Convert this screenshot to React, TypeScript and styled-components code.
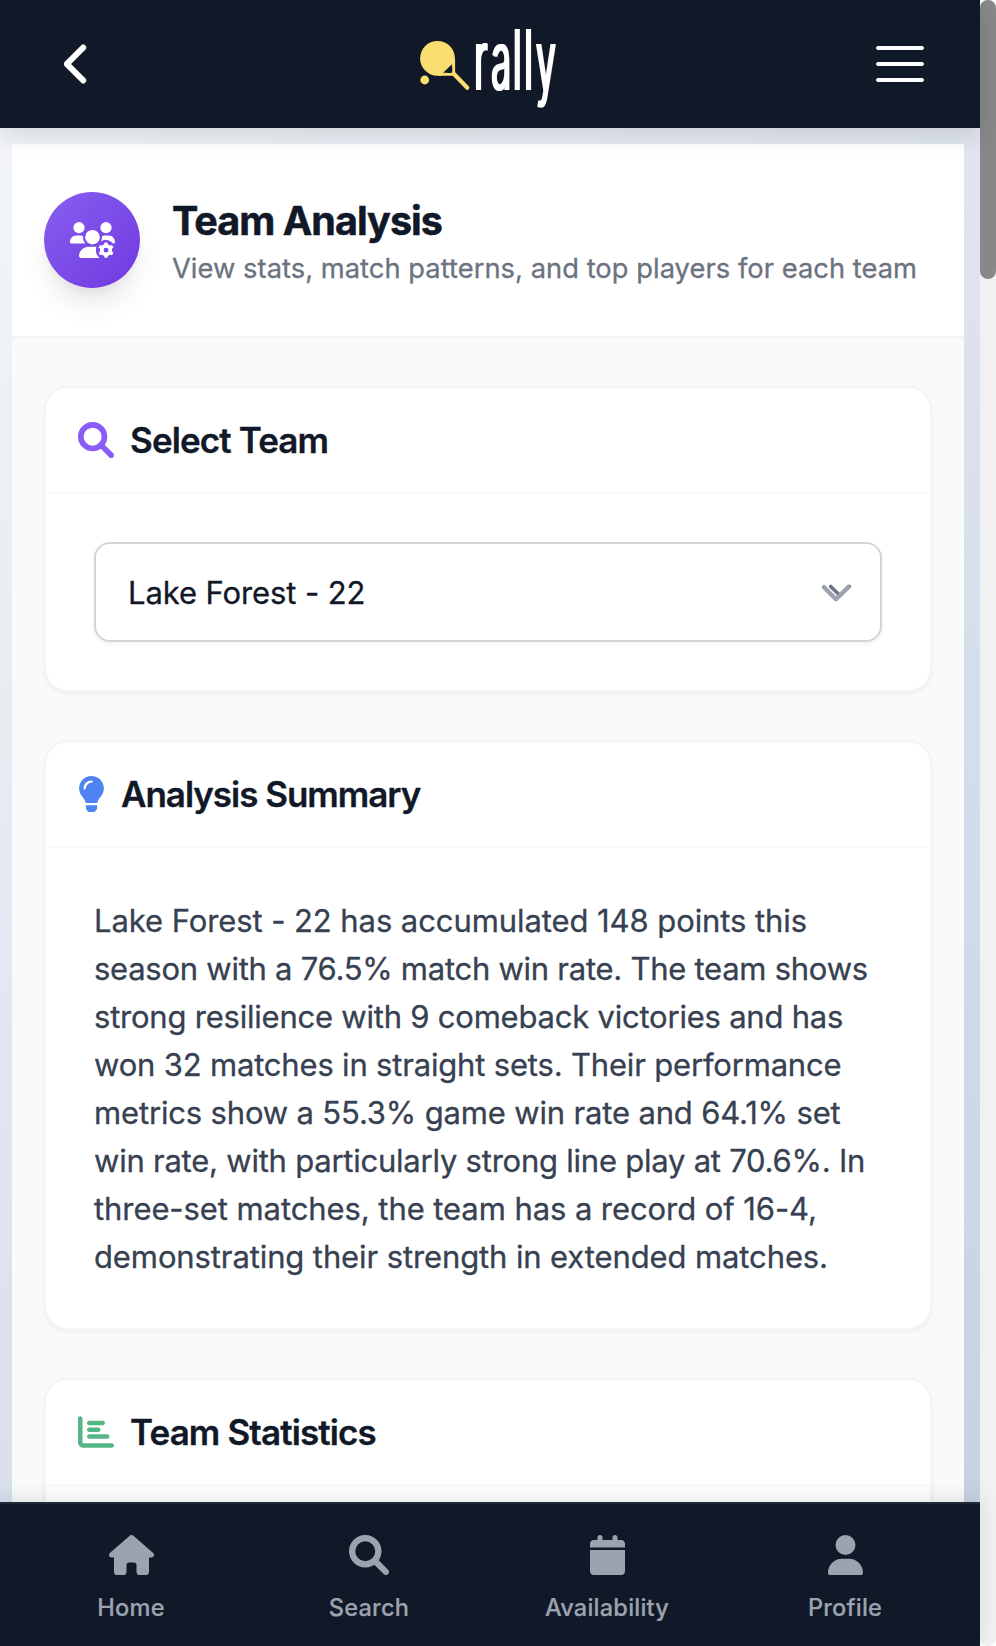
import React from "react";
import styled, { createGlobalStyle } from "styled-components";
import { FaCalendar, FaChartBar, FaChevronLeft, FaHouse, FaUser } from "react-icons/fa6";

const GlobalStyle = createGlobalStyle`
  *, *::before, *::after { box-sizing: border-box; }
  html, body, #root { height: 100%; }
  body {
    margin: 0;
    overflow: hidden;
    background: #fff;
    color: #111827;
    font-family: Inter, "Liberation Sans", sans-serif;
  }
  h1, h2, p { margin: 0; }
  button { border: 0; padding: 0; background: none; color: inherit; font: inherit; }
  svg { display: block; flex: none; }
`;

const Viewport = styled.div`
  display: flex;
  height: 100vh;
`;

const Screen = styled.div`
  display: flex;
  flex-direction: column;
  flex: 1;
  min-width: 0;
  height: 100%;
  background: linear-gradient(135deg, #f5f7fa 0%, #c3cfe2 100%);
`;

const Glyph = styled.span<{ $size: number; $ratio?: number }>`
  display: block;
  flex: none;
  font-size: ${({ $size }) => $size}px;

  svg {
    width: ${({ $ratio = 1 }) => $ratio}em;
    height: 1em;
  }
`;

const TopBar = styled.header`
  position: relative;
  z-index: 2;
  display: grid;
  grid-template-columns: 1fr auto 1fr;
  align-items: center;
  flex: none;
  height: 128px;
  padding: 0 56px;
  background: #111827;
  color: #fff;
  box-shadow: 0 8px 24px rgba(0, 0, 0, 0.12);
`;

const BackButton = styled.button`
  justify-self: start;
  margin-left: 8px;

  svg {
    stroke: currentColor;
    stroke-width: 8px;
  }
`;

const MenuButton = styled.button`
  display: flex;
  flex-direction: column;
  gap: 12px;
  justify-self: end;
`;

const MenuLine = styled.span`
  width: 48px;
  height: 4px;
  border-radius: 2px;
  background: #fff;
`;

const Main = styled.main`
  flex: 1;
  min-height: 0;
  overflow: hidden;
  margin: 16px 16px 0 12px;
  background: #f9fafb;
`;

const PageHeader = styled.section`
  display: flex;
  align-items: center;
  gap: 32px;
  height: 194px;
  padding: 0 32px;
  border-bottom: 2px solid #f3f4f6;
  background: #fff;
`;

const TeamBadge = styled.div`
  display: flex;
  align-items: center;
  justify-content: center;
  flex: none;
  width: 96px;
  height: 96px;
  padding-bottom: 1px;
  border-radius: 50%;
  background: linear-gradient(135deg, #875ff0, #7139e0);
  color: #fff;
  box-shadow: 0 20px 30px -6px rgba(0, 0, 0, 0.1), 0 8px 12px -4px rgba(0, 0, 0, 0.05);
`;

const Heading = styled.div`
  display: flex;
  flex-direction: column;
  padding-top: 9px;
  white-space: nowrap;
`;

const PageTitle = styled.h1`
  font-size: 39.5px;
  line-height: 48px;
  font-weight: 700;
  letter-spacing: -0.95px;
  -webkit-text-stroke: 0.5px currentColor;
`;

const Subtitle = styled.p`
  font-size: 27.3px;
  line-height: 47px;
  letter-spacing: 0.04px;
  color: #6b7280;
  -webkit-text-stroke: 0.3px currentColor;
`;

const CardList = styled.div`
  display: flex;
  flex-direction: column;
  gap: 48px;
  padding: 48px 32px 0;
`;

const Card = styled.section`
  border: 2px solid #f3f4f6;
  border-radius: 24px;
  background: #fff;
  box-shadow: 0 2px 4px rgba(0, 0, 0, 0.05);
`;

const CardHeader = styled.div<{ $accent: string }>`
  display: flex;
  align-items: center;
  gap: 16px;
  height: 106px;
  padding: 0 32px;
  border-bottom: 2px solid #f9fafb;
  color: ${({ $accent }) => $accent};
`;

const CardTitle = styled.h2<{ $tracking?: number }>`
  color: #111827;
  font-size: 35px;
  line-height: 48px;
  font-weight: 600;
  letter-spacing: ${({ $tracking = -0.88 }) => $tracking}px;
  white-space: nowrap;
  -webkit-text-stroke: 0.3px currentColor;
`;

const CardBody = styled.div`
  padding: 48px;
`;

const TeamSelect = styled.div`
  display: flex;
  align-items: center;
  justify-content: space-between;
  height: 100px;
  padding: 0 28px 0 32px;
  border: 2px solid #d1d5db;
  border-radius: 16px;
  font-size: 31px;
  letter-spacing: -0.1px;
  box-shadow: 0 2px 4px rgba(0, 0, 0, 0.05);
  -webkit-text-stroke: 0.3px currentColor;
`;

const Summary = styled.p`
  padding-top: 1px;
  margin-bottom: -1px;
  color: #374151;
  font-size: 31px;
  line-height: 48px;
  white-space: nowrap;
  -webkit-text-stroke: 0.3px currentColor;
`;

const SummaryLine = styled.span<{ $tracking: number }>`
  display: block;
  letter-spacing: ${({ $tracking }) => $tracking}px;
`;

const BottomNav = styled.nav`
  position: relative;
  z-index: 2;
  display: grid;
  grid-template-columns: repeat(4, 1fr);
  flex: none;
  height: 144px;
  padding: 31px 16px 0 12px;
  border-top: 2px solid #1f2937;
  background: #111827;
  color: #9ca3af;
  box-shadow: 0 -4px 20px rgba(0, 0, 0, 0.1);
`;

const NavItem = styled.a`
  display: flex;
  flex-direction: column;
  align-items: center;
  gap: 16px;
  font-size: 23.6px;
  line-height: 33px;
  font-weight: 500;
  letter-spacing: 0.2px;
  -webkit-text-stroke: 0.2px currentColor;
`;

const ScrollTrack = styled.div`
  flex: none;
  width: 16px;
  height: 100%;
  border-radius: 8px;
  background: #f1f1f1;
`;

const ScrollThumb = styled.div`
  height: 279px;
  border-radius: 8px;
  background: #888;
`;

function Logo() {
  return (
    <svg width="144" height="84" viewBox="0 0 144 84" overflow="visible" role="img" aria-label="rally">
      <defs>
        <filter id="heavier-stems" x="-10%" y="-10%" width="120%" height="120%">
          <feMorphology operator="dilate" radius="1 0" />
        </filter>
      </defs>
      <circle cx="19.5" cy="36.3" r="17.4" fill="#fbde70" />
      <path d="M35.7 37V52.3H20" fill="none" stroke="#fbde70" strokeWidth="2.8" strokeLinejoin="round" />
      <path d="M34 42.3V50.8H25Z" fill="#111827" />
      <path d="M35.5 51.5L49.3 65.7" stroke="#fbde70" strokeWidth="4.2" strokeLinecap="round" />
      <circle cx="6.7" cy="58" r="4.4" fill="#fbde70" />
      <g filter="url(#heavier-stems)">
        <text
          transform="translate(0 67.5) scale(0.42 1)"
          x="134 174.5 226 253 281"
          fill="#fff"
          fontFamily='Inter, "Liberation Sans", sans-serif'
          fontWeight="400"
          fontSize="84"
        >
          rally
        </text>
      </g>
    </svg>
  );
}

function SearchIcon() {
  return (
    <svg viewBox="0 0 512 512" fill="none" stroke="currentColor" strokeWidth="80" strokeLinecap="round">
      <circle cx="208" cy="208" r="168" />
      <path d="M336 336L472 472" />
    </svg>
  );
}

function BulbIcon() {
  return (
    <svg viewBox="0 0 384 512" fill="currentColor">
      <path d="M112.1 454.3c0 6.297 1.816 12.44 5.284 17.69l17.14 25.69c5.25 7.875 17.17 14.28 26.64 14.28h61.67c9.438 0 21.36-6.401 26.61-14.28l17.08-25.68c2.938-4.438 5.348-12.37 5.348-17.7L272 415.1h-160L112.1 454.3zM191.4 .0132C89.44 .3257 16 82.97 16 175.1c0 44.38 16.44 84.84 43.56 115.8c16.53 18.84 42.34 58.23 52.22 91.45c.0313 .25 .0938 .5166 .125 .7823h160.2c.0313-.2656 .0938-.5166 .125-.7823c9.875-33.22 35.69-72.61 52.22-91.45C351.6 260.8 368 220.4 368 175.1C368 78.61 288.9-.2837 191.4 .0132zM192 96.01c-44.13 0-80 35.89-80 79.1C112 184.8 104.8 192 96 192S80 184.8 80 176c0-61.76 50.25-111.1 112-111.1c8.844 0 16 7.159 16 16S200.8 96.01 192 96.01z" />
    </svg>
  );
}

const gearTeeth = [0, 60, 120, 180, 240, 300];

function TeamGearIcon() {
  return (
    <svg viewBox="0 0 640 512" fill="currentColor">
      <circle cx="128" cy="80" r="80" />
      <circle cx="512" cy="80" r="80" />
      <circle cx="320" cy="216" r="104" />
      <path d="M183.9 216c0-5.4 1-10.6 1.6-15.9C174.6 194.1 162.6 192 149.9 192H88C39.4 192 0 233.8 0 285.3 0 295.6 7.9 304 17.6 304h199.5C196.7 280.2 183.9 249.7 183.9 216z" />
      <path d="M551.9 192h-61.8c-12.8 0-24.9 3-35.9 8.2.6 5.3 1.6 10.4 1.6 15.8 0 21.5-6 41.5-15.5 59.4C461 262 486 255 512 255c40 0 76 19 99 49h12c9.500 0 17-8.400 17-18.700C640 233.800 600.600 192 551.900 192z" />
      <path d="M368 400c0-16.700 3.400-32.500 8.600-47.400-2.300-.100-4.400-.600-6.700-.600h-99.800C191.600 352 128 411.700 128 485.300c0 14.800 12.700 26.700 28.400 26.700h266.200C389.500 485.600 368 445.500 368 400z" />
      <circle cx="512" cy="400" r="61" fill="none" stroke="currentColor" strokeWidth="52" />
      {gearTeeth.map((angle) => (
        <rect key={angle} x="488" y="290" width="48" height="44" rx="10" transform={`rotate(${angle} 512 400)`} />
      ))}
    </svg>
  );
}

function SelectArrows() {
  return (
    <svg width="32" height="20" viewBox="0 0 32 20" fill="none" strokeLinecap="round" strokeLinejoin="round">
      <path d="M10.7 4.500L20 13.500L29.300 4.500" stroke="#6b7280" strokeWidth="3.600" />
      <path d="M4 5.200L16 17.200L28 5.200" stroke="#9ca3af" strokeWidth="4.400" />
    </svg>
  );
}

const summaryLines = [
  { text: "Lake Forest - 22 has accumulated 148 points this", tracking: -0.08 },
  { text: "season with a 76.5% match win rate. The team shows", tracking: -0.26 },
  { text: "strong resilience with 9 comeback victories and has", tracking: -0.22 },
  { text: "won 32 matches in straight sets. Their performance", tracking: -0.18 },
  { text: "metrics show a 55.3% game win rate and 64.1% set", tracking: -0.16 },
  { text: "win rate, with particularly strong line play at 70.6%. In", tracking: -0.23 },
  { text: "three-set matches, the team has a record of 16-4,", tracking: -0.08 },
  { text: "demonstrating their strength in extended matches.", tracking: -0.11 },
];

const navItems = [
  { label: "Home", Icon: FaHouse, ratio: 576 / 512 },
  { label: "Search", Icon: SearchIcon, ratio: 1 },
  { label: "Availability", Icon: FaCalendar, ratio: 448 / 512 },
  { label: "Profile", Icon: FaUser, ratio: 448 / 512 },
];

export default function App() {
  return (
    <>
      <GlobalStyle />
      <Viewport>
        <Screen>
          <TopBar>
            <BackButton aria-label="Back">
              <Glyph $size={44} $ratio={320 / 512}>
                <FaChevronLeft />
              </Glyph>
            </BackButton>
            <Logo />
            <MenuButton aria-label="Menu">
              <MenuLine />
              <MenuLine />
              <MenuLine />
            </MenuButton>
          </TopBar>
          <Main>
            <PageHeader>
              <TeamBadge>
                <Glyph $size={36} $ratio={640 / 512}>
                  <TeamGearIcon />
                </Glyph>
              </TeamBadge>
              <Heading>
                <PageTitle>Team Analysis</PageTitle>
                <Subtitle>View stats, match patterns, and top players for each team</Subtitle>
              </Heading>
            </PageHeader>
            <CardList>
              <Card>
                <CardHeader $accent="#8b5cf6">
                  <Glyph $size={36}>
                    <SearchIcon />
                  </Glyph>
                  <CardTitle>Select Team</CardTitle>
                </CardHeader>
                <CardBody>
                  <TeamSelect>
                    Lake Forest - 22
                    <SelectArrows />
                  </TeamSelect>
                </CardBody>
              </Card>
              <Card>
                <CardHeader $accent="#4f83f1">
                  <Glyph $size={36} $ratio={384 / 512}>
                    <BulbIcon />
                  </Glyph>
                  <CardTitle $tracking={-1.03}>Analysis Summary</CardTitle>
                </CardHeader>
                <CardBody>
                  <Summary>
                    {summaryLines.map(({ text, tracking }) => (
                      <SummaryLine key={text} $tracking={tracking}>
                        {text}
                      </SummaryLine>
                    ))}
                  </Summary>
                </CardBody>
              </Card>
              <Card>
                <CardHeader $accent="#54b685">
                  <Glyph $size={36}>
                    <FaChartBar />
                  </Glyph>
                  <CardTitle>Team Statistics</CardTitle>
                </CardHeader>
                <CardBody />
              </Card>
            </CardList>
          </Main>
          <BottomNav>
            {navItems.map(({ label, Icon, ratio }) => (
              <NavItem key={label}>
                <Glyph $size={40} $ratio={ratio}>
                  <Icon />
                </Glyph>
                {label}
              </NavItem>
            ))}
          </BottomNav>
        </Screen>
        <ScrollTrack>
          <ScrollThumb />
        </ScrollTrack>
      </Viewport>
    </>
  );
}
